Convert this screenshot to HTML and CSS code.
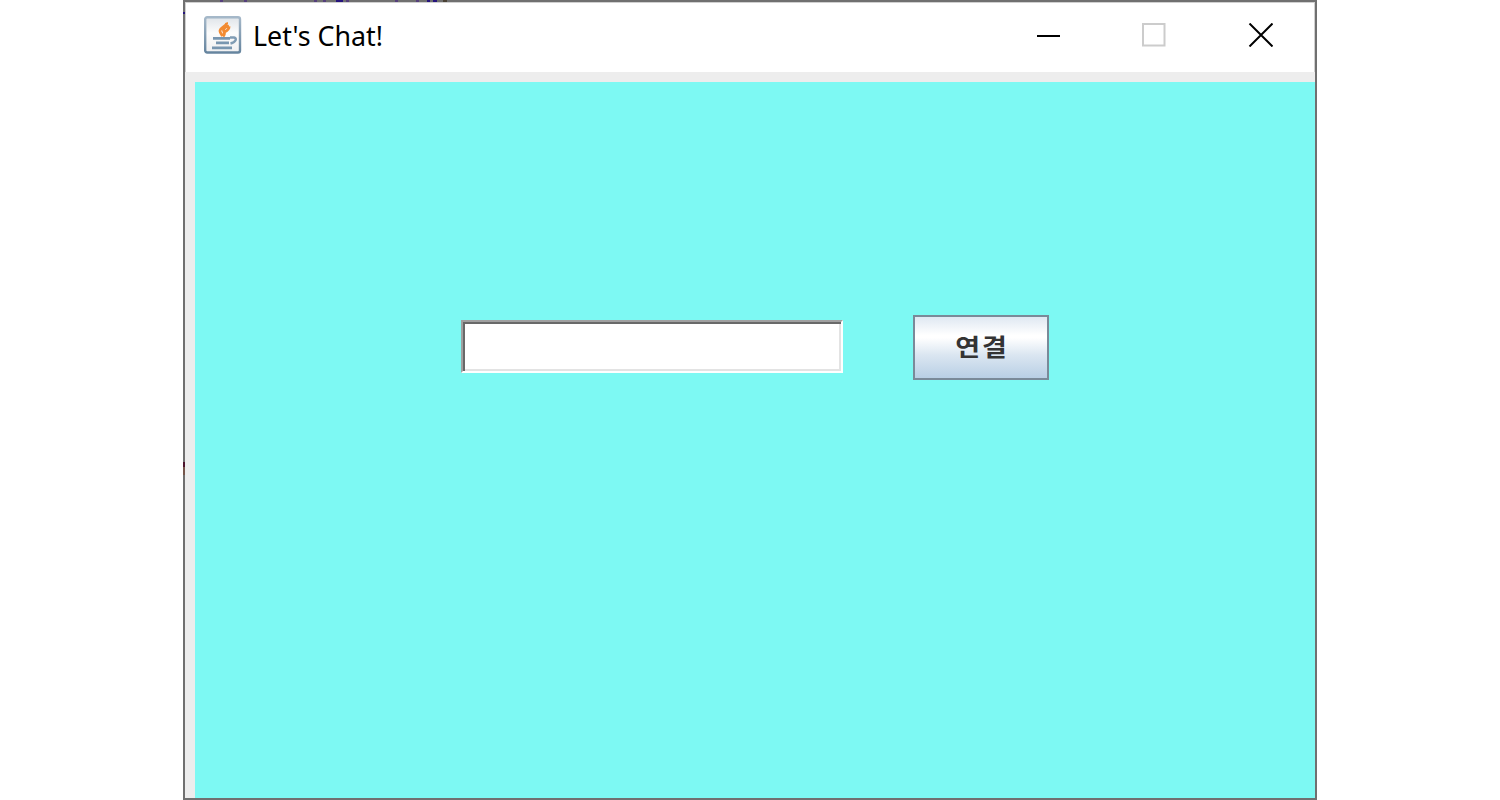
FILE: index.html
```
<!DOCTYPE html>
<html lang="ko">
<head>
<meta charset="utf-8">
<title>Let's Chat!</title>
<link rel="stylesheet" href="styles.css">
</head>
<body>
<main class="window">
  <svg class="edge-marks" width="1134" height="480" viewBox="0 0 1134 480" aria-hidden="true">
    <g fill="#553f7c"><path d="M37 0h3v2h-3zM61 0h3v2h-3zM131 0h3v2h-3zM140 0h3v2h-3zM163 0h3v2h-3zM212 0h3v2h-3zM233 0h3v2h-3z"/></g>
    <path d="M153 0h7v2h-7zM244 0h3v2h-3zM250 0h4v2h-4zM0 12h2v2H0z" fill="#26147d"/>
    <path d="M260 0h4v2h-4z" fill="#4a4134"/>
    <path d="M0 462h2v5H0z" fill="#4c142c"/>
    <path d="M0 467h2v8H0z" fill="#76564b"/>
  </svg>
  <header class="titlebar">
    <svg class="app-icon" width="38" height="38" viewBox="0 0 38 38" aria-hidden="true">
      <defs>
        <linearGradient id="tile" x1="0" y1="0" x2="0" y2="1"><stop offset="0" stop-color="#dfe4e9"/><stop offset=".45" stop-color="#fcfcfc"/><stop offset="1" stop-color="#f0f0f1"/></linearGradient>
        <linearGradient id="rim" x1="0" y1="0" x2="0" y2="1"><stop offset="0" stop-color="#a5b8c9"/><stop offset="1" stop-color="#66859f"/></linearGradient>
      </defs>
      <rect x="1.200" y="1.200" width="34.800" height="35.300" rx="2" fill="url(#tile)" stroke="url(#rim)" stroke-width="2.400"/>
      <path d="M22.500 6.500c1.500 3.500-6.500 4.500-6.500 8.500 0 2 1.500 3 2.500 5M25 10c-4.500 1-6.500 3-5 5.500 1 1.800.3 3.500-1 5M25 10.500c.3 2.500-1.500 4-4.500 5.500" fill="none" stroke="#f28b32" stroke-width="2.800"/>
      <path d="M9 22.300h17M12 26.800h13M8 31.800h20" fill="none" stroke="#7896b0" stroke-width="2.700"/>
      <path d="M26 21.500h4c3 .5 2.500 4.500-3.500 6" fill="none" stroke="#809cb4" stroke-width="2.500"/>
    </svg>
    <h1 class="title"><span class="title-text">Let's Chat!</span></h1>
    <svg class="controls" width="236" height="24" viewBox="0 0 236 24" aria-hidden="true">
      <path d="M0 12h23v2H0z" fill="#000"/>
      <rect x="106" y="1" width="21.500" height="21.500" fill="none" stroke="#ccc" stroke-width="2"/>
      <path d="M212.500 .5l23 23M235.500 .5l-23 23" stroke="#000" stroke-width="2" fill="none"/>
    </svg>
  </header>
  <section class="frame">
    <form class="panel">
      <input class="address" type="text" aria-label="address">
      <button class="connect" type="button"><span class="connect-text">연결</span></button>
    </form>
  </section>
</main>
</body>
</html>
```
FILE: styles.css
```
* { box-sizing: border-box; }
body { margin: 0; height: 800px; overflow: hidden; background: #fff; }
.window {
  position: relative;
  display: flex;
  flex-direction: column;
  width: 1134px;
  height: 800px;
  margin: 0 183px;
  border: 2px solid #707070;
  background: #fff;
}
.edge-marks { position: absolute; left: -2px; top: -2px; pointer-events: none; }
.titlebar {
  display: flex;
  align-items: flex-start;
  height: 70px;
  border-top: 1px solid #d0d0d0;
  border-left: 1px solid #d0d0d0;
  border-right: 1px solid #d0d0d0;
  padding: 0 41px 0 18px;
}
.app-icon { margin-top: 13px; flex: none; }
.title {
  width: 135px;
  height: 40px;
  margin: 12px 0 0 11px;
  font: 400 28px/40px "Noto Sans", sans-serif;
  color: #000;
  white-space: nowrap;
}
.title-text { display: inline-block; transform: scaleX(.958); transform-origin: left; }
.controls { margin: 20px 0 0 auto; flex: none; }
.frame {
  flex: 1;
  display: flex;
  padding: 10px 0 0 10px;
  background: #ededed;
}
.panel {
  flex: 1;
  display: flex;
  align-items: flex-start;
  gap: 70px;
  padding: 233px 0 0 266px;
  background: #7df9f3;
}
.address {
  width: 382px;
  height: 53px;
  margin-top: 5px;
  padding: 0 6px;
  border: 2px solid;
  border-color: #a0a0a0 #fff #fff #a0a0a0;
  border-radius: 0;
  outline: none;
  background: #fff;
  box-shadow: inset 2px 2px #696969, inset -2px -2px #e3e3e3;
}
.connect {
  width: 136px;
  height: 65px;
  padding: 0 0 3px;
  border: 2px solid #7a8a99;
  border-radius: 0;
  background: linear-gradient(#dfe8f2 0, #fff 30%, #fff 34%, #dbe6f1 62%, #b8cfe5 100%);
  color: #333;
  font: 700 27px/32px "Noto Sans CJK KR", sans-serif;
}
.connect-text { display: inline-block; letter-spacing: 2px; margin-right: -2px; transform: scaleY(.87); }
```
